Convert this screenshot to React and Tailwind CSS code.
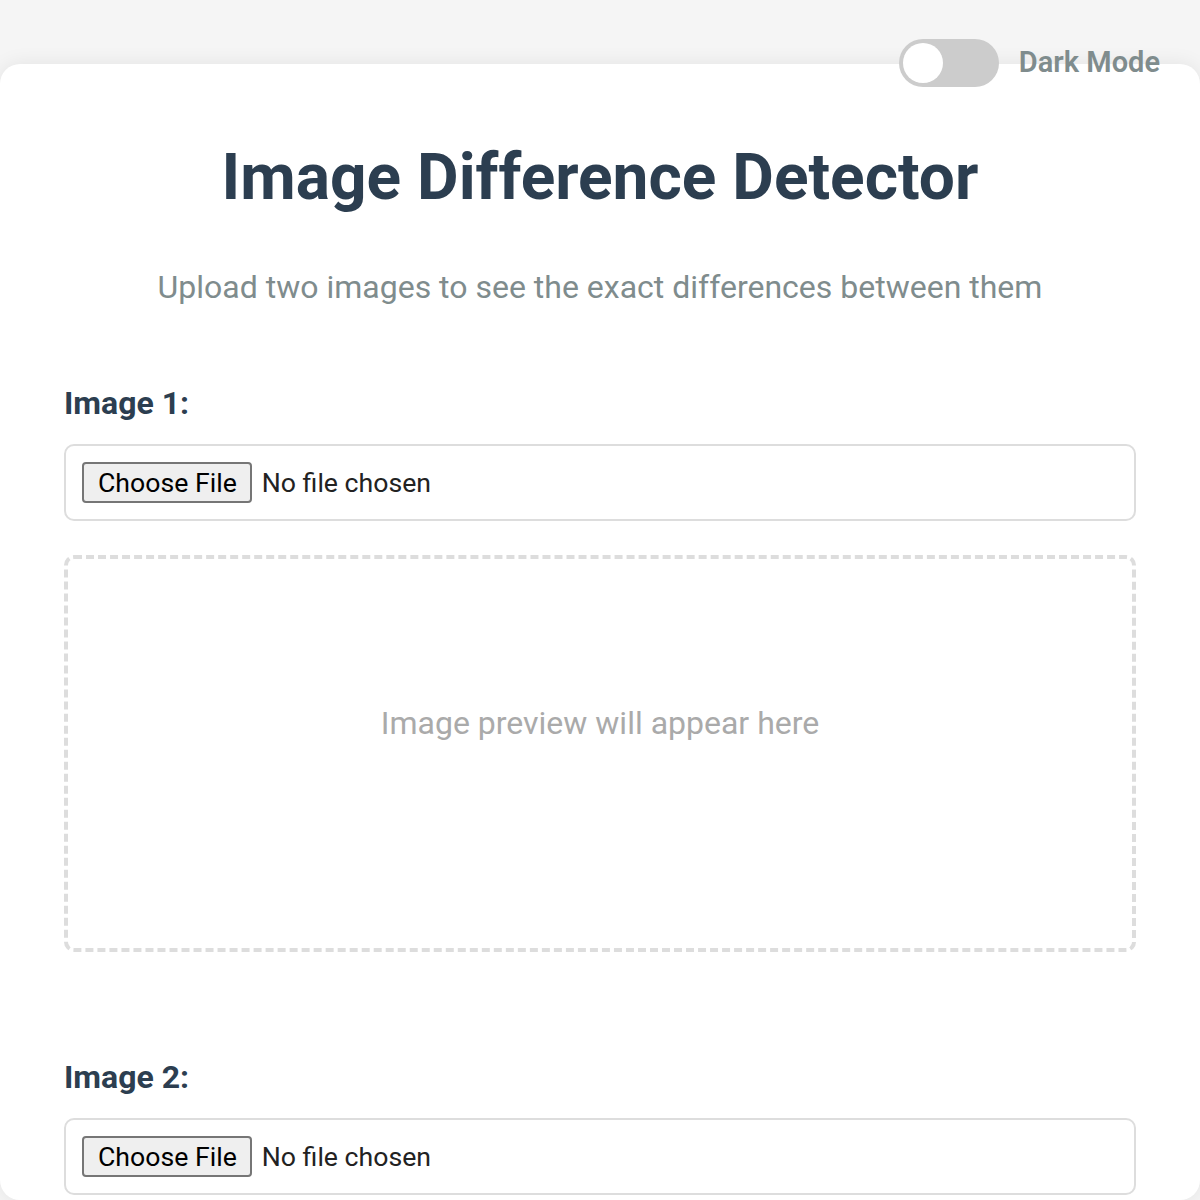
function FileField() {
  return (
    <div className="mt-[25px] flex min-h-[77px] items-center rounded-[10px] border-2 border-[#ddd] px-4">
      <span className="flex h-[41px] items-center rounded-[4px] border-2 border-[#767676] bg-[#efefef] pr-[13px] pl-[14px] text-[26.67px] text-black">
        Choose File
      </span>
      <span className="ml-[10px] text-[26.67px] text-[#222]">No file chosen</span>
    </div>
  );
}

function Section({ label, last }) {
  return (
    <div>
      <label className="block text-[32px] leading-none font-bold text-[#2c3e50]">{label}</label>
      <FileField />
      {!last && (
        <div className="mt-[34px] h-[397px] rounded-[10px] border-4 border-dashed border-[#ddd] pt-[148px] text-center text-[32px] leading-none text-[#aaa]">
          Image preview will appear here
        </div>
      )}
    </div>
  );
}

export default function App() {
  return (
    <div className="relative min-h-[1200px] bg-[#f5f5f5] pt-[64px] font-['Roboto',sans-serif]">
      <div className="absolute top-[39px] right-[40px] z-10 flex items-center gap-5">
        <div className="relative h-[48px] w-[100px] rounded-full bg-[#ccc]">
          <span className="absolute top-[4px] left-[4px] h-[40px] w-[40px] rounded-full bg-white" />
        </div>
        <span className="text-[29px] font-semibold text-[#7f8c8d]">Dark Mode</span>
      </div>

      <div className="min-h-[1136px] rounded-[20px] bg-white px-16 pt-[82px] shadow-[0_0_20px_rgba(0,0,0,0.08)]">
        <h1 className="text-center text-[64px] leading-none font-bold text-[#2c3e50]">
          Image Difference Detector
        </h1>
        <p className="mt-[61px] text-center text-[32px] leading-none text-[#7f8c8d]">
          Upload two images to see the exact differences between them
        </p>

        <div className="mt-[84px]">
          <Section label="Image 1:" />
        </div>
        <div className="mt-[109px]">
          <Section label="Image 2:" last />
        </div>
      </div>
    </div>
  );
}
